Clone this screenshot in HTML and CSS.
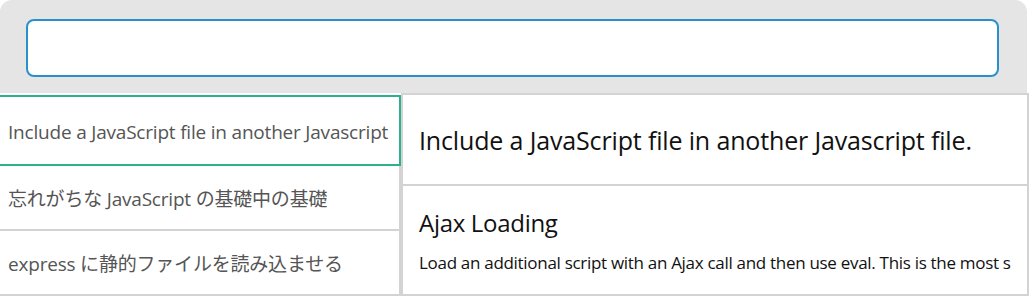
FILE: index.html
```html
<!DOCTYPE html>
<html lang="ja">
<head>
    <meta charset="UTF-8">
    <meta name="viewport" content="width=device-width, initial-scale=1.0">
    <title>Snippet Search</title>
    <link rel="stylesheet" href="styles.css">
</head>
<body>
    <div class="app">
        <div class="search-bar">
            <input type="text" class="search-input" id="query">
        </div>
        <div class="content">
            <ul class="result-list">
                <li class="result-item active">Include a JavaScript file in another Javascript</li>
                <li class="result-item">忘れがちな JavaScript の基礎中の基礎</li>
                <li class="result-item">express に静的ファイルを読み込ませる</li>
            </ul>
            <div class="detail">
                <div class="detail-title">Include a JavaScript file in another Javascript file.</div>
                <div class="detail-section">
                    <div class="section-title">Ajax Loading</div>
                    <p class="section-text">Load an additional script with an Ajax call and then use eval. This is the most s</p>
                </div>
            </div>
        </div>
    </div>
</body>
</html>
```

FILE: styles.css
```css
body {
    margin: 0;
    background: #ffffff;
    font-family: 'Open Sans', 'Noto Sans CJK JP', sans-serif;
}
.app {
    width: 1027px;
}
.search-bar {
    background: #e5e5e5;
    border-radius: 12px 12px 0 0;
    padding: 19px 28px 16px 26px;
}
.search-input {
    display: block;
    box-sizing: border-box;
    width: 100%;
    height: 58px;
    border: 2px solid #2a90c9;
    border-radius: 8px;
    background: #ffffff;
    outline: none;
}
.content {
    display: flex;
}
.result-list {
    list-style: none;
    margin: 0;
    padding: 0;
    width: 401px;
    flex-shrink: 0;
    padding-top: 2px;
}
.result-item {
    box-sizing: border-box;
    height: 65px;
    display: flex;
    align-items: center;
    padding-left: 8px;
    font-size: 19px;
    color: #555555;
    border-bottom: 2px solid #d3d3d3;
    border-right: 2px solid #d3d3d3;
    white-space: nowrap;
    overflow: hidden;
    letter-spacing: -0.2px;
}
.result-item.active {
    height: 71px;
    border: 2px solid #2db08e;
    border-left: 0;
    padding-top: 2px;
}
.detail {
    flex: 1;
    border: 2px solid #d3d3d3;
    border-bottom: 0;
}
.detail-title {
    box-sizing: border-box;
    height: 91px;
    display: flex;
    align-items: center;
    padding-left: 16px;
    font-size: 25px;
    color: #111111;
    border-bottom: 2px solid #d3d3d3;
    letter-spacing: -0.15px;
}
.detail-section {
    box-sizing: border-box;
    height: 110px;
    padding: 21px 16px 0 16px;
    border-bottom: 2px solid #d3d3d3;
}
.section-title {
    font-size: 24px;
    line-height: 32px;
    color: #111111;
    letter-spacing: -0.3px;
}
.section-text {
    margin: 12px 0 0 0;
    font-size: 17px;
    line-height: 24px;
    color: #111111;
    white-space: nowrap;
    overflow: hidden;
    letter-spacing: -0.3px;
}
```
